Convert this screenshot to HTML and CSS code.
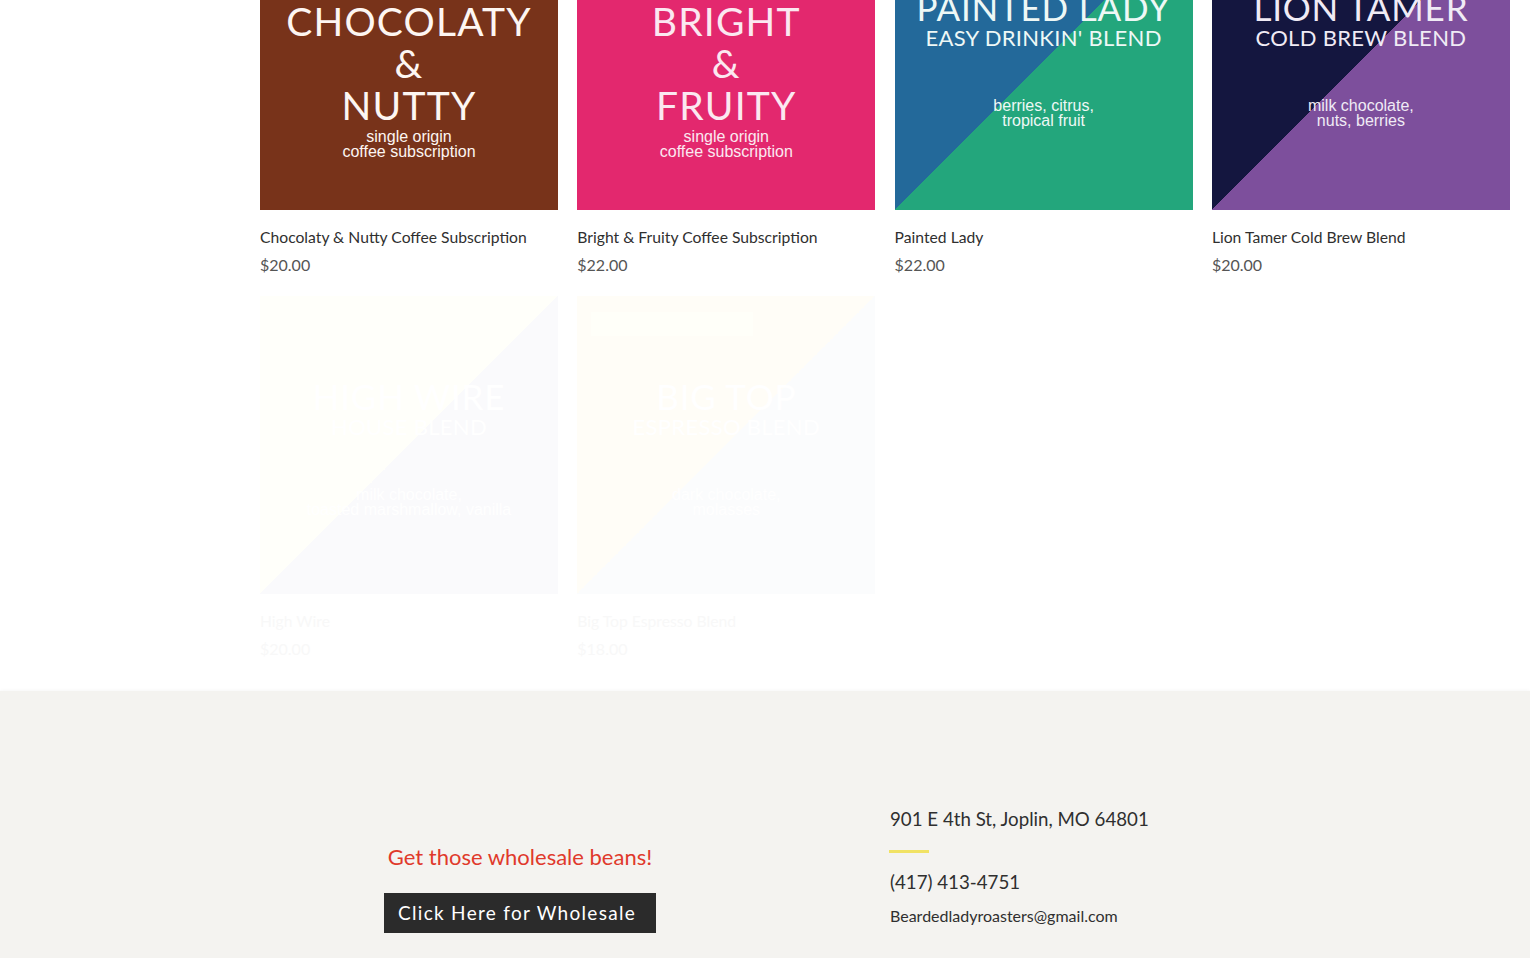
FILE: index.html
```html
<!DOCTYPE html>
<html lang="en">
<head>
<meta charset="utf-8">
<title>Shop</title>
<link rel="stylesheet" href="styles.css">
</head>
<body>
<main class="shop">
  <div class="grid">
    <div class="card">
      <div class="art art-choc">
        <span class="big">CHOCOLATY</span>
        <span class="big">&amp;</span>
        <span class="big">NUTTY</span>
        <span class="small first">single origin</span>
        <span class="small">coffee subscription</span>
      </div>
      <div class="info">
        <div class="name">Chocolaty &amp; Nutty Coffee Subscription</div>
        <div class="price">$20.00</div>
      </div>
    </div>
    <div class="card">
      <div class="art art-bright">
        <span class="big">BRIGHT</span>
        <span class="big">&amp;</span>
        <span class="big">FRUITY</span>
        <span class="small first">single origin</span>
        <span class="small">coffee subscription</span>
      </div>
      <div class="info">
        <div class="name">Bright &amp; Fruity Coffee Subscription</div>
        <div class="price">$22.00</div>
      </div>
    </div>
    <div class="card">
      <div class="art art-painted blend">
        <span class="big">PAINTED LADY</span>
        <span class="mid">EASY DRINKIN' BLEND</span>
        <span class="small notes">berries, citrus,</span>
        <span class="small">tropical fruit</span>
      </div>
      <div class="info">
        <div class="name">Painted Lady</div>
        <div class="price">$22.00</div>
      </div>
    </div>
    <div class="card">
      <div class="art art-lion blend">
        <span class="big">LION TAMER</span>
        <span class="mid">COLD BREW BLEND</span>
        <span class="small notes">milk chocolate,</span>
        <span class="small">nuts, berries</span>
      </div>
      <div class="info">
        <div class="name">Lion Tamer Cold Brew Blend</div>
        <div class="price">$20.00</div>
      </div>
    </div>
    <div class="card faded">
      <div class="art art-wire blend">
        <span class="big">HIGH WIRE</span>
        <span class="mid">HOUSE BLEND</span>
        <span class="small notes">milk chocolate,</span>
        <span class="small">toasted marshmallow, vanilla</span>
      </div>
      <div class="info">
        <div class="name">High Wire</div>
        <div class="price">$20.00</div>
      </div>
    </div>
    <div class="card faded">
      <div class="art art-top blend">
        <span class="ribbon"></span>
        <span class="big">BIG TOP</span>
        <span class="mid">ESPRESSO BLEND</span>
        <span class="small notes">dark chocolate,</span>
        <span class="small">molasses</span>
      </div>
      <div class="info">
        <div class="name">Big Top Espresso Blend</div>
        <div class="price">$18.00</div>
      </div>
    </div>
  </div>
</main>
<footer class="footer">
  <div class="footer-inner">
    <div class="wholesale">
      <h2 class="cta-title">Get those wholesale beans!</h2>
      <a class="cta-btn" href="#">Click Here for Wholesale</a>
    </div>
    <div class="contact">
      <p class="addr">901 E 4th St, Joplin, MO 64801</p>
      <span class="rule"></span>
      <p class="phone">(417) 413-4751</p>
      <p class="email">Beardedladyroasters@gmail.com</p>
    </div>
  </div>
</footer>
</body>
</html>
```
FILE: styles.css
```css
html, body {
  margin: 0;
  padding: 0;
  background: #ffffff;
  font-family: "Lato", "Open Sans", sans-serif;
  color: #2f2f2f;
  overflow: hidden;
}

.shop {
  padding: 0 0 31px 260px;
}

.grid {
  margin-top: -88px;
  display: grid;
  grid-template-columns: repeat(4, 298px);
  column-gap: 19.3px;
  row-gap: 20px;
}

.card {
  display: flex;
  flex-direction: column;
}

.art {
  width: 298px;
  height: 298px;
  box-sizing: border-box;
  display: flex;
  flex-direction: column;
  align-items: center;
  color: #fdf6f2;
  padding-top: 88px;
  font-family: "Lato", "Liberation Sans", sans-serif;
  position: relative;
}

.art .big {
  font-size: 39px;
  line-height: 42px;
  letter-spacing: 1.2px;
  font-weight: 400;
  white-space: nowrap;
}

.art .mid {
  font-size: 22px;
  line-height: 24px;
  letter-spacing: 0.3px;
  white-space: nowrap;
}

.art .small {
  font-family: "Liberation Sans", sans-serif;
  font-size: 16px;
  line-height: 15px;
  white-space: nowrap;
}

.art .small.first {
  margin-top: 3px;
}

.art .small.notes {
  margin-top: 48px;
}

.art-choc { background: #78331a; }
.art-bright { background: #e3286e; color: #fbe8f1; }

.blend { padding-top: 76px; }

.blend .big {
  font-size: 35px;
  line-height: 38px;
  letter-spacing: 0.8px;
}

.art-painted {
  background: linear-gradient(135deg, #23699a 50%, #23a67c 50%);
  color: #eef8f6;
}

.art-lion {
  background: linear-gradient(135deg, #14163f 50%, #7d4f9c 50%);
  color: #f0ebf5;
}

.art-wire {
  background: linear-gradient(135deg, #fffffa 50%, #fafafc 50%);
  color: #ffffff;
  padding-top: 81px;
}

.art-top {
  background: linear-gradient(135deg, #fffdf7 50%, #fbfcfd 50%);
  color: #ffffff;
  padding-top: 81px;
}

.ribbon {
  position: absolute;
  left: 14px;
  top: 16px;
  width: 162px;
  height: 24px;
  background: #fffff9;
}

.info {
  padding-top: 16px;
}

.name {
  font-size: 15.7px;
  line-height: 22px;
  color: #2f2f2f;
  white-space: nowrap;
}

.price {
  margin-top: 6px;
  font-size: 16px;
  line-height: 22px;
  color: #555555;
}

.faded .name,
.faded .price {
  color: #f8f8f8;
}

.footer {
  background: #f4f3f0;
  box-shadow: 0 -1px 3px rgba(0, 0, 0, 0.03);
  min-height: 280px;
}

.footer-inner {
  display: flex;
  align-items: flex-start;
  padding: 115px 0 0 384px;
  gap: 234px;
}

.wholesale {
  width: 272px;
  display: flex;
  flex-direction: column;
  align-items: center;
  margin-top: 37px;
}

.cta-title {
  margin: 0;
  font-weight: 400;
  font-size: 22px;
  line-height: 28px;
  color: #e0392b;
  white-space: nowrap;
}

.cta-btn {
  margin-top: 22px;
  width: 272px;
  height: 40px;
  box-sizing: border-box;
  background: #2b2b2b;
  color: #ffffff;
  text-decoration: none;
  font-size: 19px;
  line-height: 40px;
  letter-spacing: 1.3px;
  padding-left: 14px;
}

.contact {
  display: flex;
  flex-direction: column;
  align-items: flex-start;
  color: #2f2f2f;
}

.addr, .phone, .email {
  margin: 0;
  white-space: nowrap;
}

.addr {
  font-size: 18.7px;
  line-height: 26px;
}

.rule {
  display: block;
  width: 40px;
  height: 3px;
  background: #f1e264;
  margin: 18px 0 0 -1px;
}

.phone {
  font-size: 18.7px;
  line-height: 26px;
  margin-top: 16px;
}

.email {
  font-size: 16px;
  line-height: 22px;
  margin-top: 10px;
}
```
